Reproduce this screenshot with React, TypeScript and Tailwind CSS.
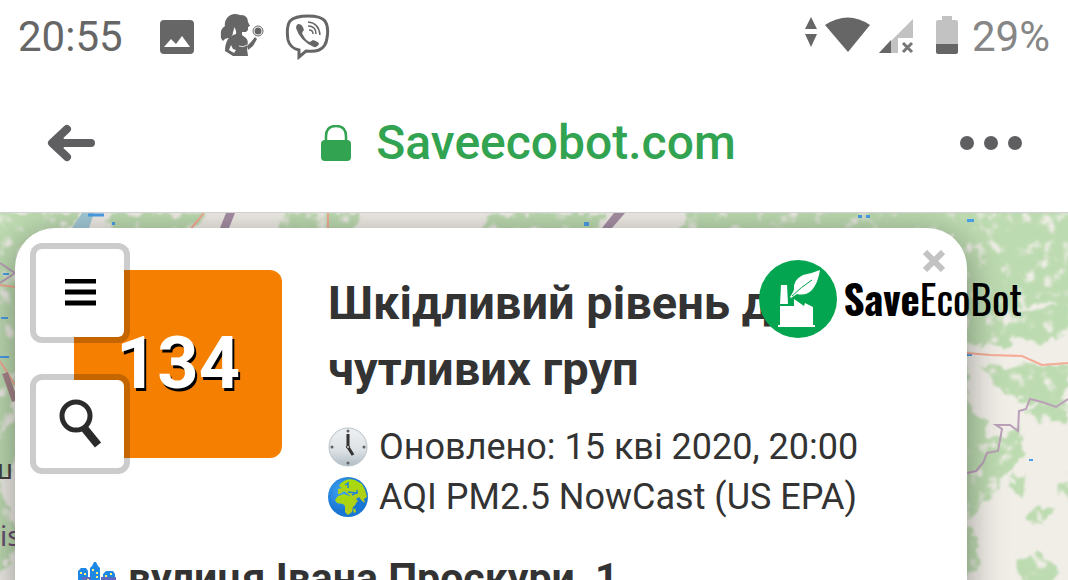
import { useState } from 'react';
import type { ReactNode } from 'react';

// Forest patches, drawn rough by the filter in <MapTiles />
const forests = [
  'M-10 0H78L66 20L50 60L20 90L30 140L10 190L25 240L0 270L22 330L-10 372Z',
  'M112 0H205L190 20H105Z',
  'M285 0H362L350 20H278Z',
  'M490 0H606L596 20H480Z',
  'M690 -10H1090V98L1040 88L1000 98L950 98V20H680Z',
  'M960 66L1020 70L1010 132H955Z',
  'M985 96L1010 98L1068 92V124L1040 132L1015 122Z',
  'M950 138H968V160L966 190L985 205L988 225L978 250L985 290L970 310L980 350L960 372H950Z',
  'M978 152L1005 154L1068 152V170L1058 196L1030 190L1010 182L996 172Z',
  'M985 226L1020 216L1026 240L1004 262L990 290L970 300V250Z',
  'M1024 196L1050 190L1068 186V206L1040 210Z',
  'M1014 260L1026 262L1024 286L1014 280Z',
  'M1026 304L1040 292L1054 298L1044 312L1030 310Z',
  'M1018 350L1040 340L1058 356L1052 372H1022Z',
  'M1060 270L1074 260V290L1058 284Z',
];

function MapTiles() {
  return (
    <svg
      className="absolute inset-0 h-full w-full"
      viewBox="0 0 1068 367"
      preserveAspectRatio="xMidYMin slice"
      aria-hidden="true"
    >
      <defs>
        <filter id="rough" x="-5%" y="-5%" width="110%" height="110%">
          <feTurbulence type="fractalNoise" baseFrequency="0.07" numOctaves="4" seed="7" result="n" />
          <feDisplacementMap in="SourceGraphic" in2="n" scale="16" xChannelSelector="R" yChannelSelector="B" result="shape" />
          <feColorMatrix in="n" type="matrix" values="0 0 0 0 0  0 0 0 0 0  0 0 0 0 0  0 5 0 0 -1.2" result="holes" />
          <feComposite in="shape" in2="holes" operator="in" result="land" />
          <feGaussianBlur in="land" stdDeviation="0.9" />
        </filter>
      </defs>
      <rect width="1068" height="367" fill="#f1eee8" />
      <g fill="#bddbb1" filter="url(#rough)">
        {forests.map((d) => (
          <path key={d} d={d} />
        ))}
      </g>
      <path d="M82 0L70 18H88L94 0Z" fill="#a3cbd8" />
      <path d="M88 2H104" stroke="#4a9fe8" strokeWidth="3" />
      <g fill="#4a9fe8">
        <rect x="112" y="9" width="3" height="3" />
        <rect x="584" y="9" width="5" height="4" />
        <rect x="858" y="2" width="4" height="3" />
        <rect x="866" y="2" width="4" height="3" />
        <rect x="967" y="6" width="7" height="3" />
        <rect x="3" y="60" width="6" height="2" />
        <rect x="1" y="104" width="7" height="2" />
        <rect x="0" y="143" width="9" height="2" />
        <rect x="967" y="140" width="5" height="3" />
        <rect x="1029" y="246" width="4" height="2" />
      </g>
      <g fill="none" stroke="#f5ac96" strokeWidth="2">
        <path d="M204 0L189 18M328 0V16M0 72L15 74M0 148L15 172" />
        <path d="M967 140L990 142L1022 143L1042 152L1068 150" />
      </g>
      <g fill="none" stroke="#baa0b8" strokeWidth="2">
        <path d="M0 50L15 60M0 70L15 60" />
        <path d="M967 260L976 258L983 250L987 240L998 238L1002 216L996 212H1010L1018 218L1019 198L1026 196L1030 186L1042 189L1056 194L1068 186" />
      </g>
      <path d="M226 0H235L229 15H220ZM614 0H625L612 15H602Z" fill="#a68fa5" />
      <path d="M5 160L15 188" stroke="#a8888c" strokeWidth="6" />
      <g className="font-['Noto_Sans',sans-serif] text-[28px]" fill="#6a4f72">
        <text x="-12" y="266" fill="#444">
          ш
        </text>
        <text x="-10" y="333">
          tis
        </text>
      </g>
    </svg>
  );
}

function StatusBar() {
  return (
    <div className="flex h-[74px] items-center justify-between px-[18px] text-[42px] leading-none text-[#666]">
      <div className="flex items-center">
        <span>20:55</span>
        <svg className="ml-9 h-9 w-9" viewBox="0 0 36 36" fill="currentColor" aria-hidden="true">
          <path
            fillRule="evenodd"
            d="M5 1H31Q35 1 35 5V31Q35 35 31 35H5Q1 35 1 31V5Q1 1 5 1ZM5 28H31L23 17L17 25L12 20Z"
          />
        </svg>
        <svg className="ml-6 h-[46px] w-[46px]" viewBox="0 3 46 46" fill="currentColor" aria-hidden="true">
          <path d="M21 4Q13 1 8 7Q5 11 6 15Q1 18 2 24Q1 27 4 30Q6 27 10 27Q14 25 14 21Q16 17 14 12Q15 8 20 7Z" />
          <path d="M14 8Q17 4 23 4Q29 5 29 11L31 15L29 16L29 19L27 21L23 21L23 24L27 27Q30 30 28 35L28 38L29 45H14L6 40Q6 33 9 28Q11 25 17 23Q18 19 14 15Z" />
          <path d="M12 34L14 38L17 39L15 42L10 39Z" fill="#fff" />
          <path d="M20 35Q24 37 28 34" fill="none" stroke="#fff" strokeWidth="0.8" />
          <path d="M28 35L32 31L36 26L38 28L34 35L29 39Z" />
          <circle cx="39" cy="20" r="3.5" />
          <circle cx="39" cy="20" r="5" fill="none" stroke="currentColor" />
        </svg>
        <svg className="ml-5 h-[46px] w-[46px]" viewBox="0 1 46 46" fill="none" stroke="currentColor" aria-hidden="true">
          <path
            d="M23 3Q36 3 40 8Q44 14 42 25Q41 34 34 37Q29 39 21 38L14 44V37Q5 35 3 27Q1 14 5 8Q10 3 23 3Z"
            strokeWidth="3"
          />
          <path
            d="M13 11Q17 10 19 17Q16 20 18 22Q21 28 25 29L28 27Q34 29 34 31Q32 35 29 34Q15 28 11 15Q11 12 13 11Z"
            fill="currentColor"
            stroke="none"
          />
          <path d="M23 9Q34 10 35 22M23 13Q31 13 31 21M24 17Q28 17 28 21" strokeWidth="1.5" />
        </svg>
      </div>
      <div className="flex items-center text-[#868686]">
        <svg className="h-[46px] w-[153px]" viewBox="0 0 153 46" fill="#666" aria-hidden="true">
          <path d="M0 15L6 3L12 15ZM0 20H12L6 33Z" />
          <path d="M20 11Q43 -4 65 11L43 38Z" />
          <path d="M74 39L108 5V24H93V39Z" fill="#c2c2c2" />
          <path d="M74 39L86 26V39Z" />
          <path d="M98 29L107 38M107 29L98 38" stroke="#777" strokeWidth="3" />
          <path d="M137 2H147V6H151Q153 6 153 8V30H131V8Q131 6 133 6H137Z" fill="#c2c2c2" />
          <path d="M131 30H153V38Q153 40 151 40H133Q131 40 131 38Z" />
        </svg>
        <span className="ml-[14px]">29%</span>
      </div>
    </div>
  );
}

function BrowserBar() {
  return (
    <header className="flex h-[139px] items-center justify-between border-b border-[#d0d0d0] px-[46px]">
      <button type="button" aria-label="Back" className="text-[#5f5f62]">
        <svg className="h-10 w-[50px]" viewBox="0 0 50 40" fill="none" stroke="currentColor" strokeWidth="8" aria-hidden="true">
          <path d="M7 20H45M21 6L6 20L21 34M14 17V23" strokeLinecap="round" strokeLinejoin="round" />
        </svg>
      </button>
      <a href="#top" className="flex items-center gap-6 text-5xl font-medium text-[#32a350]">
        <svg className="h-9 w-8" viewBox="0 0 32 36" fill="none" aria-hidden="true">
          <path d="M6 18V11Q6 1 16 1Q26 1 26 11V18" stroke="currentColor" strokeWidth="2.5" />
          <rect x="1" y="15" width="30" height="21" rx="4" fill="currentColor" />
        </svg>
        Saveecobot.com
      </a>
      <button type="button" aria-label="Menu" className="flex gap-[10px]">
        <span className="h-[14px] w-[14px] rounded-full bg-[#5f5f62]" />
        <span className="h-[14px] w-[14px] rounded-full bg-[#5f5f62]" />
        <span className="h-[14px] w-[14px] rounded-full bg-[#5f5f62]" />
      </button>
    </header>
  );
}

function MapButton({ label, children }: { label: string; children: ReactNode }) {
  return (
    <button
      type="button"
      aria-label={label}
      className="flex h-[100px] w-[100px] items-center justify-center rounded-xl border-6 border-black/20 bg-white bg-clip-padding"
    >
      {children}
    </button>
  );
}

function ClockIcon() {
  return (
    <svg className="h-10 w-10 shrink-0" viewBox="0 0 40 40" aria-hidden="true">
      <defs>
        <linearGradient id="face" x2="0" y2="1">
          <stop offset="0" stopColor="#eef1f3" />
          <stop offset="0.6" stopColor="#dce1e5" />
          <stop offset="1" stopColor="#b0bec5" />
        </linearGradient>
      </defs>
      <circle cx="20" cy="20" r="19" fill="url(#face)" stroke="#b8c2c8" />
      <g fill="#616161">
        <circle cx="20" cy="4" r="1.5" />
        <circle cx="36" cy="20" r="1.5" />
        <circle cx="20" cy="36" r="1.5" />
        <circle cx="4" cy="20" r="1.5" />
      </g>
      <path d="M20 7V20L25 28" fill="none" stroke="#333" strokeWidth="3" />
      <circle cx="20" cy="20" r="1.5" fill="#ddd" stroke="#333" />
    </svg>
  );
}

function GlobeIcon() {
  return (
    <svg className="h-10 w-10 shrink-0" viewBox="0 0 40 40" aria-hidden="true">
      <defs>
        <radialGradient id="sea" cx="0.35" cy="0.35">
          <stop offset="0" stopColor="#42a5f5" />
          <stop offset="1" stopColor="#1976d2" />
        </radialGradient>
        <linearGradient id="land" x2="0" y2="1">
          <stop offset="0" stopColor="#a6dc0c" />
          <stop offset="1" stopColor="#b5c91c" />
        </linearGradient>
      </defs>
      <circle cx="20" cy="20" r="20" fill="url(#sea)" />
      <g fill="url(#land)">
        <path d="M16 4Q20 1 27 3L34 7Q38 13 39 20L36 22L37 26L34 24L31 20L28 22L30 24L27 27L25 22L20 17L16 14L12 17L10 17V12L14 11L11 9L13 6Z" />
        <path d="M10 19L16 17L24 20L28 27L25 30L24 35L20 38L17 35V29L15 27L9 26L7 23Z" />
        <path d="M27 31L28 35L26 36L25 33Z" />
      </g>
      <path d="M20 15L28 16L24 18M29 13V17M17 8L20 6V11" fill="none" stroke="#2185dc" strokeWidth="1.5" />
    </svg>
  );
}

function CityIcon() {
  return (
    <svg className="h-10 w-[43px] shrink-0" viewBox="-3 -4 43 40" aria-hidden="true">
      <path d="M1 40V9L4 6H9L11 9V40ZM13 40V6L15 4L17 0H19L21 4L23 6V40ZM26 40V12L29 9H36L38 12V40Z" fill="#1e88e5" />
      <path d="M5 40V15H14V40ZM24 40V15H39V40Z" fill="#5c6bc0" />
      <g fill="#fff176">
        <rect x="3" y="10" width="2" height="2" />
        <rect x="7" y="11" width="2" height="2" />
        <rect x="15" y="7" width="2" height="2" />
        <rect x="19" y="10" width="2" height="2" />
        <rect x="19" y="14" width="2" height="2" />
        <rect x="28" y="13" width="2" height="2" />
        <rect x="33" y="11" width="2" height="2" />
        <rect x="10" y="17" width="2" height="2" />
      </g>
    </svg>
  );
}

function Logo() {
  return (
    <a href="#top" className="absolute top-[47px] right-[46px] flex items-center gap-1.5 text-black">
      <svg className="h-[78px] w-[78px]" viewBox="0 0 78 78" aria-hidden="true">
        <circle cx="39" cy="39" r="39" fill="#03a551" />
        <g fill="#fff">
          <path d="M22 25H28L29 44H21Z" />
          <path d="M21 46H35V39L45 46L46 43L54 47V65H56V67H19V65H21Z" />
          <path d="M31 37Q35 31 35 29Q34 20 44 15Q54 13 61 10Q59 23 53 30Q47 36 38 34L32 38Z" />
        </g>
        <path d="M33 36Q42 27 53 20" fill="none" stroke="#03a551" />
      </svg>
      <span className="pb-1 font-['Oswald','Roboto_Condensed','Liberation_Sans_Narrow',sans-serif] text-[41px] leading-none">
        <b>Save</b>EcoBot
      </span>
    </a>
  );
}

function StationCard({ onClose }: { onClose: () => void }) {
  return (
    <section className="relative mt-[15px] mr-[101px] ml-[15px] rounded-[40px] bg-white px-[59px] pt-[42px] pb-24 text-[#333] shadow-[0_8px_38px_rgba(0,0,0,0.4)]">
      <button type="button" aria-label="Close" onClick={onClose} className="absolute top-[22px] right-[22px] text-[#c3c3c3]">
        <svg className="h-[22px] w-[22px]" viewBox="0 0 22 22" stroke="currentColor" strokeWidth="6" aria-hidden="true">
          <path d="M2 2L20 20M20 2L2 20" />
        </svg>
      </button>
      <div className="flex gap-[46px]">
        <div className="flex h-[188px] w-[208px] shrink-0 items-center justify-center rounded-xl bg-[#f57f00] text-7xl font-bold text-white [text-shadow:2px_3px_0_#000]">
          134
        </div>
        <div>
          <h1 className="text-[47px] leading-[66px] font-bold">
            Шкідливий рівень для
            <br />
            чутливих груп
          </h1>
          <div className="mt-5 text-4xl leading-[50px]">
            <p className="flex items-center gap-[11px]">
              <ClockIcon />
              Оновлено: 15 кві 2020, 20:00
            </p>
            <p className="flex items-center gap-[11px]">
              <GlobeIcon />
              AQI PM2.5 NowCast (US EPA)
            </p>
          </div>
        </div>
      </div>
      <h2 className="mt-[26px] flex items-center gap-[11px] text-[41px] leading-[60px] font-bold">
        <CityIcon />
        вулиця Івана Проскури, 1
      </h2>
    </section>
  );
}

export default function App() {
  const [open, setOpen] = useState(true);

  return (
    <div className="flex h-screen flex-col overflow-hidden bg-white font-['Roboto',sans-serif]">
      <StatusBar />
      <BrowserBar />
      <main className="relative min-h-0 flex-1 overflow-hidden">
        <MapTiles />
        {open && <StationCard onClose={() => setOpen(false)} />}
        <div className="absolute top-[30px] left-[30px] flex flex-col gap-[31px]">
          <MapButton label="Layers">
            <svg className="h-7 w-8" viewBox="0 0 32 28" aria-hidden="true">
              <path d="M1 2H32M1 13H32M1 24H32" stroke="#000" strokeWidth="5" />
            </svg>
          </MapButton>
          <MapButton label="Search">
            <svg className="h-[50px] w-11" viewBox="0 0 44 50" fill="none" stroke="#2b2b2b" aria-hidden="true">
              <circle cx="18" cy="17" r="14" strokeWidth="5" />
              <path d="M27 30L40 46" strokeWidth="8" />
            </svg>
          </MapButton>
        </div>
        <Logo />
      </main>
    </div>
  );
}
